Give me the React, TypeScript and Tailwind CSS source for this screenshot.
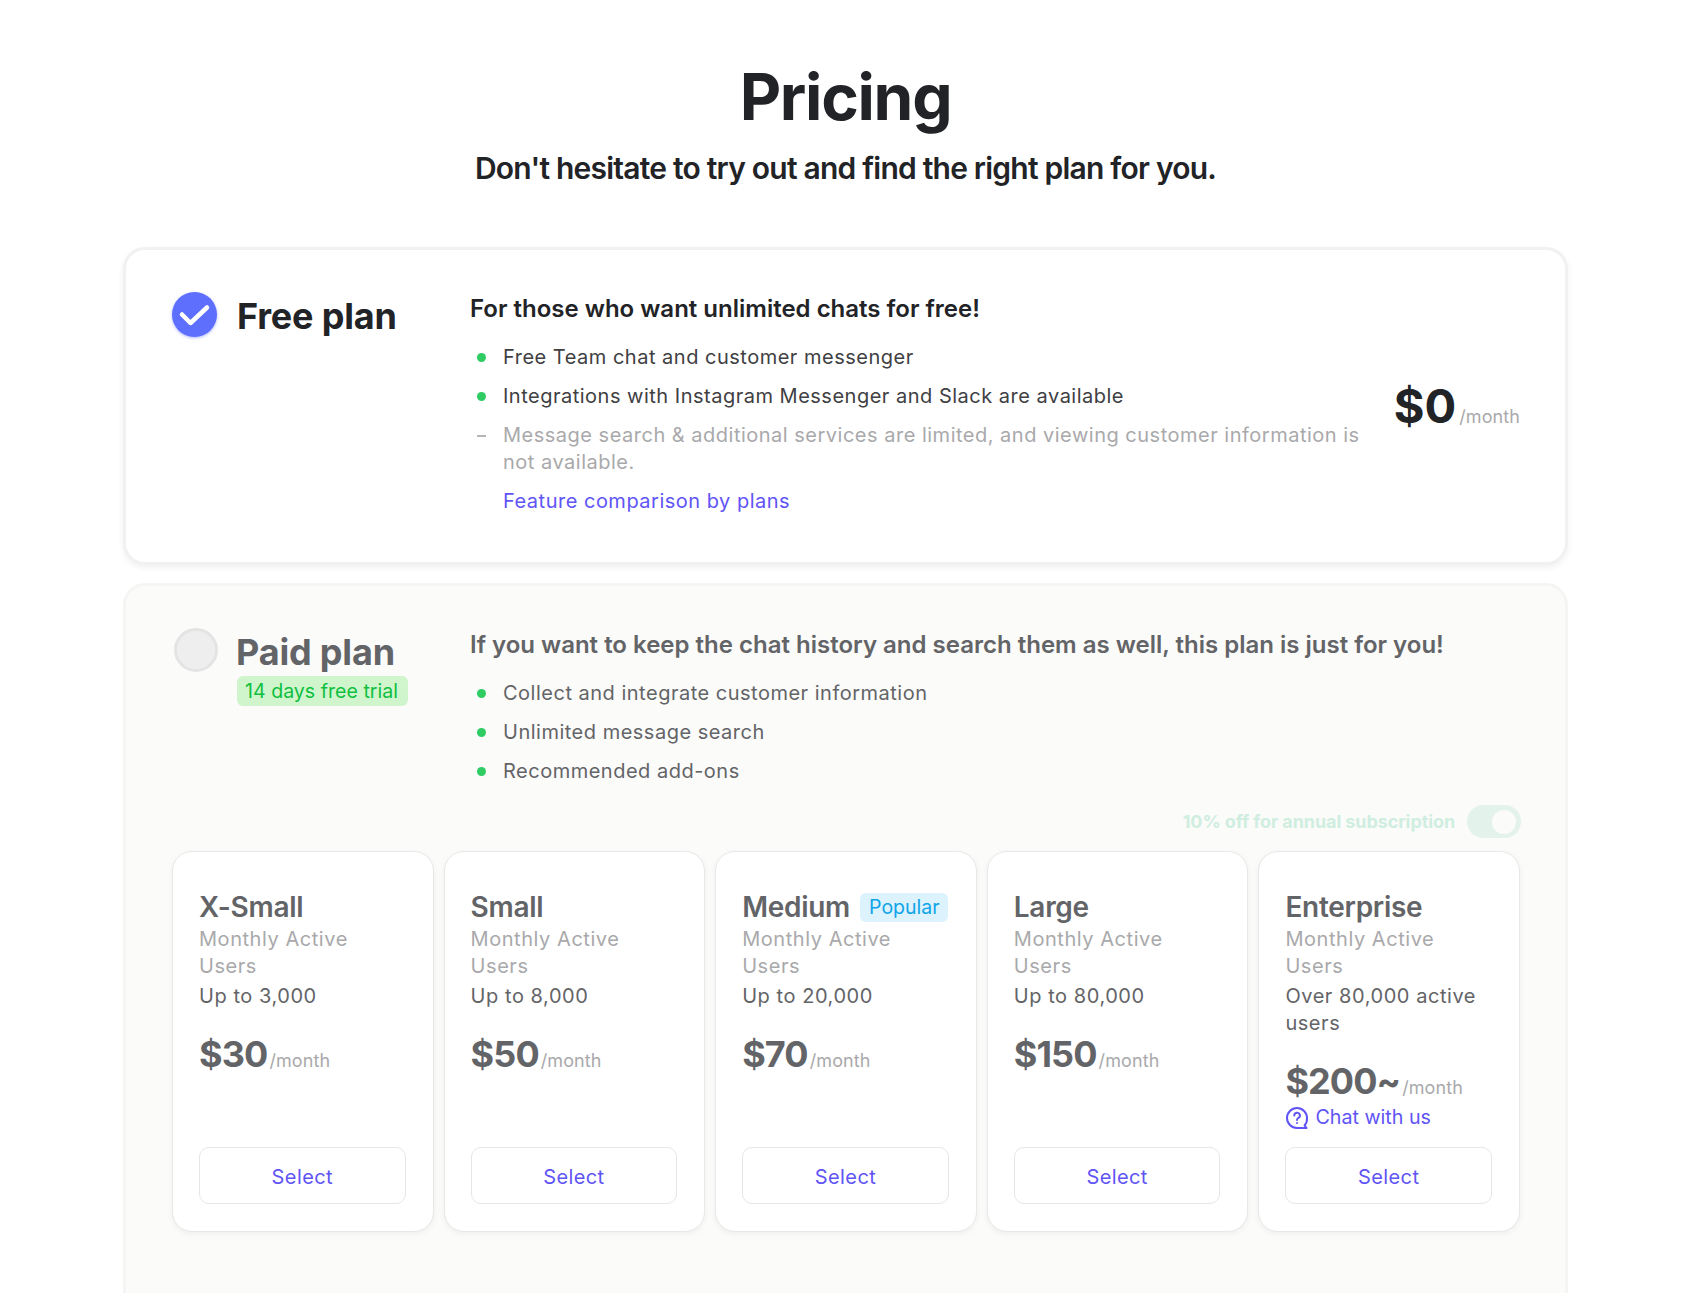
import React from 'react'

const plans = [
  { name: 'X-Small', users: 'Up to 3,000', price: '$30' },
  { name: 'Small', users: 'Up to 8,000', price: '$50' },
  { name: 'Medium', users: 'Up to 20,000', price: '$70', popular: true },
  { name: 'Large', users: 'Up to 80,000', price: '$150' },
  { name: 'Enterprise', users: 'Over 80,000 active users', price: '$200~', chat: true },
]

function Bullet({ children, dash, muted }: { children: React.ReactNode; dash?: boolean; muted?: boolean }) {
  return (
    <li className={`flex ${muted ? 'text-[#a9a9ab]' : ''}`}>
      <span className="w-[33px] shrink-0 flex h-[27px] items-center pl-[7px]">
        {dash ? (
          <span className="block w-[9px] h-[2px] bg-[#b5b5b7]" />
        ) : (
          <span className="block w-[9px] h-[9px] rounded-full bg-[#2ecc63]" />
        )}
      </span>
      <span>{children}</span>
    </li>
  )
}

function PlanCard({ plan }: { plan: (typeof plans)[number] }) {
  return (
    <div className="min-w-0 h-[381px] flex flex-col bg-white border border-[#e8e8e8] rounded-[20px] shadow-[0_2px_6px_rgba(0,0,0,0.05)] pl-[26px] pr-[27px] pt-[38px] pb-[27px]">
      <div className="flex items-center gap-[10px] h-[35px]">
        <span className="text-[28px] font-semibold leading-[35px] tracking-[-0.01em] text-[#636467]">{plan.name}</span>
        {plan.popular && (
          <span className="h-[29px] pl-[9px] pr-[8px] rounded-[6px] bg-[#dcf2fc] text-[#0ea5e9] text-[19.5px] leading-[29px]">Popular</span>
        )}
      </div>
      <div className="text-[20px] leading-[27px] tracking-[0.55px] text-[#a9a9ab] mt-[1px]">Monthly Active Users</div>
      <div className="text-[20px] leading-[27px] tracking-[0.55px] text-[#636467] mt-[3px]">{plan.users}</div>
      <div className="flex items-baseline mt-[22px] gap-[2px]">
        <span className="text-[36px] leading-[44px] font-bold tracking-[-0.025em] text-[#636467]">{plan.price}</span>
        <span className="text-[18px] tracking-[0.1px] text-[#a9a9ab]">/month</span>
      </div>
      {plan.chat && (
        <div className="flex items-center gap-[6px] mt-[1px] text-[19.7px] leading-[27px] text-[#6054f6]">
          <svg width="24" height="24" viewBox="0 0 24 24" fill="none" stroke="currentColor" strokeWidth="2" strokeLinecap="round" strokeLinejoin="round">
            <path d="M22 12a10 10 0 1 0-10 10h9.5l-1.9-2.6A10 10 0 0 0 22 12z" />
            <path d="M9.3 9.5a2.8 2.8 0 1 1 4 2.5c-.9.5-1.3 1-1.3 2" />
            <path d="M12 17h.01" />
          </svg>
          Chat with us
        </div>
      )}
      <button className="mt-auto h-[57px] w-full pt-[2px] rounded-[10px] border border-[#e6e6e6] bg-white text-[20px] tracking-[0.4px] text-[#6054f6]">Select</button>
    </div>
  )
}

export default function App() {
  return (
    <div className="h-[1293px] overflow-hidden bg-white font-['Inter','Liberation_Sans',sans-serif] pr-[17px] pl-[123px]">
      <div className="w-[1445px]">
        <div className="text-center pt-[58px]">
          <h1 className="text-[64px] leading-[78px] font-bold tracking-[-0.02em] text-[#222326]">Pricing</h1>
          <p className="text-[30px] leading-[40px] font-semibold tracking-[-0.026em] text-[#222326] mt-[12px]">Don't hesitate to try out and find the right plan for you.</p>
        </div>

        <section className="mt-[59px] border-[3px] border-[#f1f1f1] rounded-[22px] bg-white shadow-[0_3px_6px_rgba(0,0,0,0.06)] pl-[46px] pr-[45px] pt-[42px] pb-[47px] flex">
          <div className="w-[298px] shrink-0 flex items-start gap-[20px]">
            <div className="w-[45px] h-[45px] rounded-full bg-[#5d6ffc] shadow-[0_1px_3px_rgba(93,111,252,0.5)]">
              <svg width="45" height="45" viewBox="0 0 45 45" fill="none" stroke="white" strokeWidth="4.5" strokeLinecap="round" strokeLinejoin="round">
                <path d="M10 22.5l8.5 8.5L35 15.5" />
              </svg>
            </div>
            <h2 className="mt-[2px] text-[36px] leading-[45px] font-bold tracking-[-0.005em] text-[#222326]">Free plan</h2>
          </div>
          <div className="w-[895px] shrink-0">
            <h3 className="mt-[1px] text-[24px] leading-[32px] font-semibold text-[#222326]">For those who want unlimited chats for free!</h3>
            <ul className="mt-[19px] flex flex-col gap-[12px] text-[20px] leading-[27px] tracking-[0.5px] text-[#404043]">
              <Bullet>Free Team chat and customer messenger</Bullet>
              <Bullet>Integrations with Instagram Messenger and Slack are available</Bullet>
              <Bullet dash muted>Message search &amp; additional services are limited, and viewing customer information is not available.</Bullet>
              <li className="pl-[33px] text-[#6054f6]">Feature comparison by plans</li>
            </ul>
          </div>
          <div className="ml-auto self-center mt-[5px] flex items-baseline gap-[3px]">
            <span className="text-[47px] leading-[60px] font-bold text-[#222326]">$0</span>
            <span className="text-[18px] tracking-[0.1px] text-[#a9a9ab]">/month</span>
          </div>
        </section>

        <section className="mt-[18px] border-[3px] border-[#f5f5f4] rounded-[22px] bg-[#fbfbfa] pl-[46px] pr-[45px] pt-[42px] pb-[100px]">
          <div className="flex">
            <div className="w-[298px] shrink-0 flex items-start gap-[20px]">
              <div className="ml-[2px] w-[44px] h-[44px] rounded-full bg-[#eeeeee] border-[3px] border-[#e4e4e4]" />
              <div className="-ml-[2px]">
                <h2 className="mt-[2px] text-[36px] leading-[45px] font-bold tracking-[-0.005em] text-[#636467]">Paid plan</h2>
                <span className="inline-block ml-[1px] mt-[1px] h-[30px] pl-[8px] pr-[10px] rounded-[6px] bg-[#d0f5cc] text-[#0fbf3f] text-[19.6px] leading-[31px]">14 days free trial</span>
              </div>
            </div>
            <div>
              <h3 className="mt-[1px] text-[24px] leading-[32px] font-semibold text-[#636467]">If you want to keep the chat history and search them as well, this plan is just for you!</h3>
              <ul className="mt-[19px] flex flex-col gap-[12px] text-[20px] leading-[27px] tracking-[0.5px] text-[#636467]">
                <Bullet>Collect and integrate customer information</Bullet>
                <Bullet>Unlimited message search</Bullet>
                <Bullet>Recommended add-ons</Bullet>
              </ul>
            </div>
          </div>
          <div className="flex items-center justify-end gap-[12px] mt-[20px] -mr-[1px]">
            <span className="text-[18px] font-bold tracking-[-0.005em] text-[#cfeee0]">10% off for annual subscription</span>
            <div className="w-[54px] h-[33px] rounded-full bg-[#e3f3ec] flex items-center justify-end pr-[5px]">
              <span className="block w-[24px] h-[24px] rounded-full bg-[#fbfbfa]" />
            </div>
          </div>
          <div className="grid grid-cols-5 gap-[10px] mt-[13px]">
            {plans.map((p) => (
              <PlanCard key={p.name} plan={p} />
            ))}
          </div>
        </section>
      </div>
    </div>
  )
}
